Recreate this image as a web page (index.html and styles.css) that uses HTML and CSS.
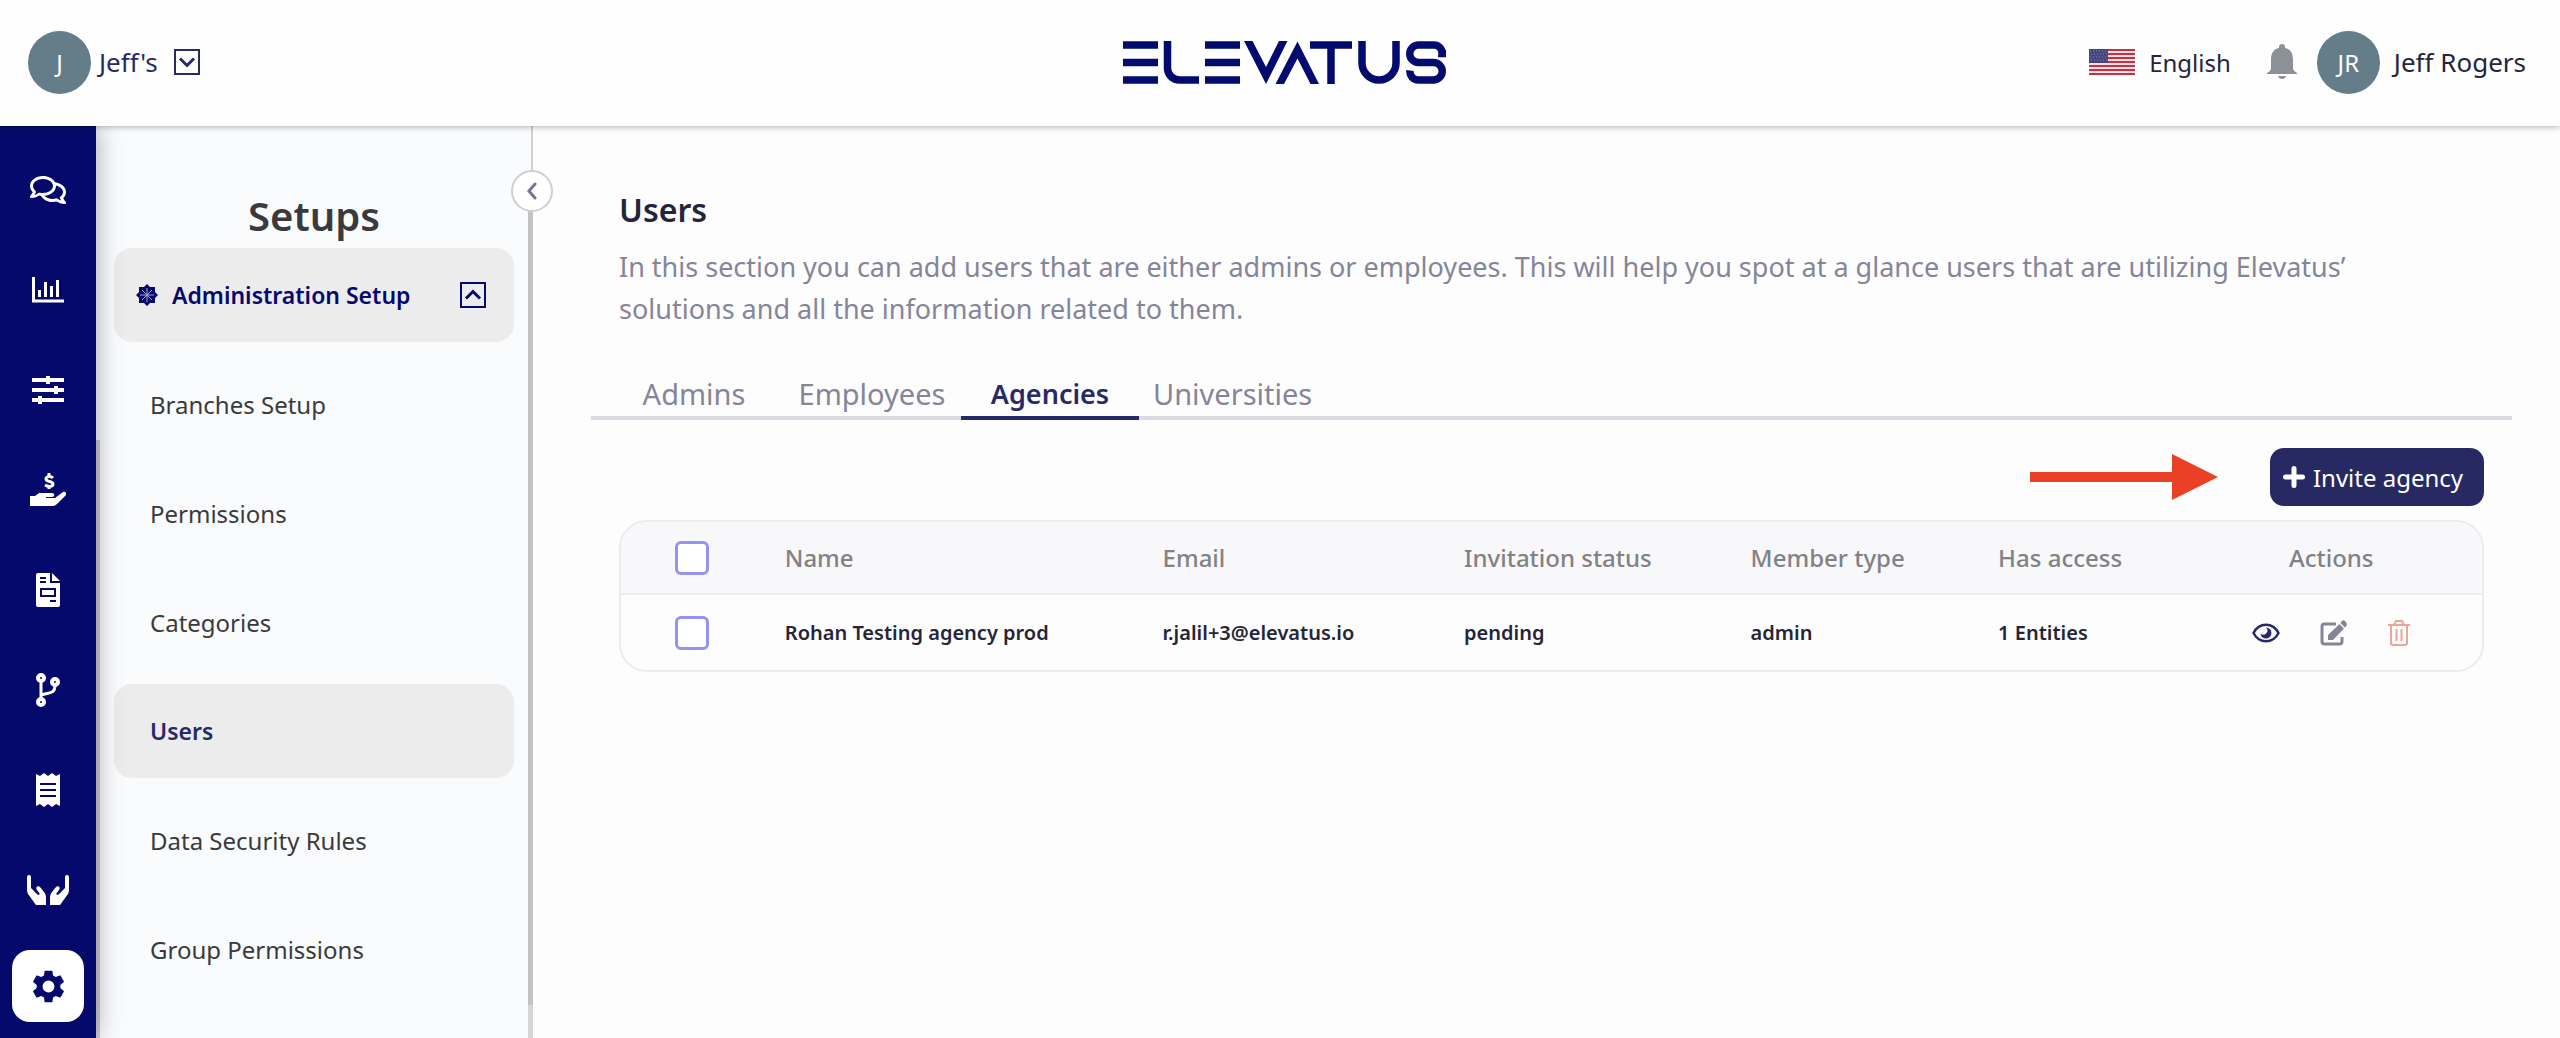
FILE: index.html
```html
<!DOCTYPE html>
<html lang="en">
<head>
<meta charset="utf-8">
<title>Elevatus – Users</title>
<link rel="stylesheet" href="styles.css">
</head>
<body>
<header class="topbar">
  <button class="company" type="button">
    <span class="avatar">J</span>
    <span class="person">Jeff's</span>
    <svg class="box-chevron" viewBox="0 0 26 26" fill="none" stroke="currentColor"><rect x="1" y="1" width="24" height="24" stroke-width="2"/><path d="M6 9.500l7 7 7-7" stroke-width="3"/></svg>
  </button>
  <a class="logo" href="#" aria-label="Elevatus home">
    <svg viewBox="0 0 323 43" fill="none" stroke="currentColor" stroke-width="7.500">
      <path d="M0 4h35M0 21.500h35M0 39h35M82 4h35M82 21.500h35M82 39h35M187 4h42M208 4v39"/>
      <path d="M44.500 0v27a12 12 0 0 0 12 12H76"/>
      <path d="M239 0v22a17 17 0 0 0 34 0V0"/>
      <path d="M323 12.500h-4a8 8 0 0 0-8.500-8.500h-15a8.500 8.500 0 0 0 0 17.500h15a8.500 8.500 0 0 1 0 17.500h-15a8.500 8.500 0 0 1-8.500-9.500"/>
      <path d="M121 0h8.500L143 26 156 0h8.500L143 43zM152.500 43l22-42.500L196 43h-8.500l-13-25.500-13.500 25.500z" fill="currentColor" stroke="none"/>
    </svg>
  </a>
  <div class="account">
    <button class="language" type="button">
      <svg class="flag" viewBox="0 0 46 26"><path fill="#f3dfe2" d="M0 0h46v26H0z"/><path stroke="#c23346" stroke-width="2" d="M0 1h46M0 5h46M0 9h46M0 13h46M0 17h46M0 21h46M0 25h46"/><path fill="#46467f" d="M0 0h19v14H0z"/><path stroke="#8583ad" stroke-dasharray="1 2" d="M1 2h17M2 5h16M1 8h17M2 11h16"/></svg>
      <span>English</span>
    </button>
    <button class="bell" type="button" aria-label="Notifications"><svg viewBox="0 0 30 36" fill="currentColor"><path d="M15 0a3 3 0 0 1 3 3v1c6 1 8 6 8 12v8c0 2 1 3 4 5v1H0v-1c3-2 4-3 4-5v-8C4 10 6 5 12 4V3a3 3 0 0 1 3-3zM11 32h8c-1 4-7 4-8 0z"/></svg></button>
    <button class="profile" type="button"><span class="avatar">JR</span><span class="person">Jeff Rogers</span></button>
  </div>
</header>
<div class="shell">
  <nav class="rail" aria-label="Main">
    <a href="#" aria-label="Conversations"><svg viewBox="0 0 576 512" fill="currentColor"><path d="M532 386.200c27.500-27.100 44-61.100 44-98.200 0-80-76.500-146.100-176.200-157.900C368.300 72.500 294.300 32 208 32 93.100 32 0 103.600 0 192c0 37 16.500 71 44 98.200-15.300 30.700-37.300 54.500-37.700 54.900-6.300 6.700-8.100 16.500-4.400 25 3.600 8.500 12 14 21.200 14 53.500 0 96.700-20.200 125.200-38.800 9.200 2.100 18.700 3.700 28.400 4.900C208.100 407.600 281.800 448 368 448c20.800 0 40.800-2.400 59.800-6.800C456.300 459.700 499.400 480 553 480c9.200 0 17.500-5.500 21.200-14 3.600-8.500 1.900-18.300-4.400-25-.4-.3-22.500-24.100-37.800-54.800zM142.200 298.800L122.100 312c-16.600 10.800-33.500 19.400-50.600 25.600 3.200-5.500 6.400-11.400 9.500-17.500l15.900-31.800L77.700 256C62.400 240.800 48 218.700 48 192c0-60.700 73.300-112 160-112s160 51.300 160 112-73.300 112-160 112c-16.500 0-33-1.900-49-5.600zM498.300 352l-24.700 24.400 15.500 31c3.100 6.200 6.300 12 9.500 17.600-17.100-6.200-34-14.800-50.600-25.600l-17.900-11.600-20.800 4.900c-16 3.700-32.500 5.600-49 5.600-54 0-102.200-20.100-131.300-49.700C338 339.500 416 272.900 416 192c0-3.400-.4-6.700-.7-10C479.700 196.500 528 238.800 528 288c0 26.700-14.400 48.800-29.700 64z"/></svg></a>
    <a href="#" aria-label="Analytics"><svg class="mid" viewBox="0 0 32 26" fill="none" stroke="currentColor" stroke-width="3"><path d="M1.500 0v24H32M7.500 13v7M13.500 5v15M19.500 9v11M25.500 3v17"/></svg></a>
    <a href="#" aria-label="Preferences"><svg class="mid" viewBox="0 0 32 28" fill="none" stroke="currentColor" stroke-width="4"><path d="M0 4h32M0 14h32M0 24h32M16 0v8M24 10v8M8 20v8"/></svg></a>
    <a href="#" aria-label="Finance"><svg viewBox="0 0 36 34" fill="currentColor"><path d="M0 23h5l4-3h13c3 0 3 4 0 4h-6v1h9l8-6c2-1 4 1 3 3l-9 9q-2 2-4 2H0z"/><path d="M23 5c-2-2-7-2-7 1s7 2 7 5-5 3-8 1M19 0v3M19 13v3" fill="none" stroke="currentColor" stroke-width="3"/></svg></a>
    <a href="#" aria-label="Invoices"><svg class="page" viewBox="0 0 24 34"><path fill="currentColor" d="M2 0h12v10h10v22a2 2 0 0 1-2 2H2a2 2 0 0 1-2-2V2a2 2 0 0 1 2-2zM16 0l8 8h-8z"/><path stroke="#06096c" stroke-width="2" fill="none" d="M4 5h6M4 9h6M5 16h14v7H5zM14 28h6"/></svg></a>
    <a href="#" aria-label="Pipelines"><svg class="page" viewBox="0 0 24 34" fill="none" stroke="currentColor" stroke-width="4"><circle cx="5" cy="5" r="3"/><circle cx="5" cy="29" r="3"/><circle cx="19" cy="9" r="3"/><path d="M5 8v18M19 12c0 9-5 7-14 10" stroke-width="3"/></svg></a>
    <a href="#" aria-label="Receipts"><svg class="page" viewBox="0 0 24 34"><path fill="currentColor" d="M0 1l4 2 4-3 4 3 4-3 4 3 4-2v32l-4-2-4 3-4-3-4 3-4-3-4 2z"/><path stroke="#06096c" stroke-width="2" d="M4 11h16M4 17h16M4 23h16"/></svg></a>
    <a href="#" aria-label="Onboarding"><svg class="wide" viewBox="0 0 42 30" fill="currentColor"><path d="M0 2a2 2 0 0 1 4 0v11l7 7 2-1-3-4c-2-3 1-5 3-3l4 5q2 2 2 5v8H9l-8-11q-1-2-1-4zM42 2a2 2 0 0 0-4 0v11l-7 7-2-1 3-4c2-3-1-5-3-3l-4 5q-2 2-2 5v8h10l8-11q1-2 1-4z"/></svg></a>
    <a href="#" class="current" aria-label="Setups"><svg class="gear" viewBox="2 2 20 20" fill="currentColor"><path d="M19.140 12.940c.04-.3.060-.61.060-.94 0-.32-.02-.64-.07-.94l2.030-1.580c.18-.14.230-.41.120-.61l-1.920-3.320c-.12-.22-.37-.29-.59-.22l-2.390.96c-.5-.38-1.030-.7-1.620-.94l-.36-2.540c-.04-.24-.24-.41-.48-.41h-3.840c-.24 0-.43.17-.47.41l-.36 2.540c-.59.24-1.130.57-1.620.94l-2.390-.96c-.22-.08-.47 0-.59.22L2.740 8.870c-.12.210-.08.470.12.610l2.030 1.580c-.05.300-.09.630-.09.940s.02.640.07.940l-2.030 1.580c-.18.140-.23.410-.12.610l1.920 3.320c.12.220.37.290.59.220l2.390-.96c.5.380 1.030.7 1.620.94l.36 2.540c.05.240.24.410.48.410h3.840c.24 0 .44-.17.47-.41l.36-2.540c.59-.24 1.130-.56 1.620-.94l2.390.96c.22.080.47 0 .59-.22l1.920-3.320c.12-.22.070-.47-.12-.61zM12 15.600A3.600 3.600 0 1 1 12 8.400a3.600 3.600 0 0 1 0 7.200z"/></svg></a>
  </nav>
  <aside class="sidebar">
    <button class="collapse" type="button" aria-label="Collapse sidebar"><svg viewBox="0 0 12 18" fill="none" stroke="currentColor" stroke-width="3" stroke-linecap="round"><path d="M9 2L3 9l6 7"/></svg></button>
    <h2>Setups</h2>
    <button class="group" type="button">
      <svg class="flower" viewBox="0 0 22 22" fill="currentColor"><path d="M11 0l3 3 5 0v5l3 3-3 3v5h-5l-3 3-3-3H3v-5l-3-3 3-3V3h5z"/><path d="M11 4v14M4 11h14M6 6l10 10M16 6L6 16" stroke="#a9aac9" stroke-width="1"/></svg>
      <span>Administration Setup</span>
      <svg class="box-chevron" viewBox="0 0 26 26" fill="none" stroke="currentColor"><rect x="1" y="1" width="24" height="24" stroke-width="2"/><path d="M6 16.500l7-7 7 7" stroke-width="3"/></svg>
    </button>
    <nav class="menu" aria-label="Administration Setup">
      <a href="#">Branches Setup</a>
      <a href="#">Permissions</a>
      <a href="#">Categories</a>
      <a href="#" class="current">Users</a>
      <a href="#">Data Security Rules</a>
      <a href="#">Group Permissions</a>
    </nav>
  </aside>
  <main class="content">
    <div class="intro">
      <h1>Users</h1>
      <p>In this section you can add users that are either admins or employees. This will help you spot at a glance users that are utilizing Elevatus’ solutions and all the information related to them.</p>
    </div>
    <nav class="tabs" aria-label="User types">
      <a href="#">Admins</a>
      <a href="#">Employees</a>
      <a href="#" class="current">Agencies</a>
      <a href="#">Universities</a>
    </nav>
    <div class="toolbar">
      <svg class="arrow" viewBox="0 0 188 46" fill="#ea4025"><path d="M0 18h142V0l46 23-46 23V28H0z"/></svg>
      <button class="invite" type="button"><svg viewBox="0 0 22 22" stroke="currentColor" stroke-width="5" stroke-linecap="round"><path d="M11 2.500v17M2.500 11h17"/></svg>Invite agency</button>
    </div>
    <div class="card">
      <table>
        <colgroup><col class="c-check"><col class="c-name"><col class="c-email"><col class="c-status"><col class="c-type"><col class="c-access"><col class="c-actions"></colgroup>
        <thead>
          <tr><th><input type="checkbox" aria-label="Select all"></th><th>Name</th><th>Email</th><th>Invitation status</th><th>Member type</th><th>Has access</th><th class="center">Actions</th></tr>
        </thead>
        <tbody>
          <tr><td><input type="checkbox" aria-label="Select Rohan Testing agency prod"></td><td>Rohan Testing agency prod</td><td>r.jalil+3@elevatus.io</td><td>pending</td><td>admin</td><td>1 Entities</td>
            <td><div class="actions">
              <button class="view" type="button" aria-label="View"><svg viewBox="0 0 28 20"><path d="M1.500 10C7-1 21-1 26.500 10 21 21 7 21 1.500 10z" fill="none" stroke="currentColor" stroke-width="2.500"/><path d="M14 4.500a5.500 5.500 0 1 1-5.500 6 3 3 0 0 0 5.500-6z" fill="currentColor"/></svg></button>
              <button class="edit" type="button" aria-label="Edit"><svg viewBox="0 0 28 26"><path d="M16 4H4.500A2.500 2.500 0 0 0 2 6.500v15A2.500 2.500 0 0 0 4.500 24h15a2.500 2.500 0 0 0 2.500-2.500V17" fill="none" stroke="currentColor" stroke-width="3"/><path d="M8 20v-5L19.500 4l4.500 4.500L13 20zM21 2q2-3 4.500-.5t.5 5L25 7.500 20.500 3z" fill="currentColor"/></svg></button>
              <button class="delete" type="button" aria-label="Delete"><svg viewBox="0 0 22 26" fill="none" stroke="currentColor" stroke-width="2"><path d="M0 5h22M3 5v18a2 2 0 0 0 2 2h12a2 2 0 0 0 2-2V5M6 5l2-4h6l2 4M8.500 9v12M13.500 9v12"/></svg></button>
            </div></td></tr>
        </tbody>
      </table>
    </div>
  </main>
</div>
</body>
</html>
```
FILE: styles.css
```css
* { box-sizing: border-box; }

body {
  margin: 0;
  min-height: 100vh;
  display: flex;
  flex-direction: column;
  font-family: "Noto Sans", "Open Sans", sans-serif;
  font-size: 24px;
  color: #25253a;
  background: #fdfdfd;
}

button {
  font: inherit;
  color: inherit;
  border: 0;
  padding: 0;
  background: none;
  display: flex;
  align-items: center;
}

a { color: inherit; text-decoration: none; }
svg { display: block; flex: none; }

.topbar {
  display: grid;
  grid-template-columns: 1fr auto 1fr;
  align-items: center;
  height: 126px;
  padding: 0 34px 2px 28px;
  background: #fefefe;
  box-shadow: 0 1px 6px rgba(0, 0, 0, 0.3);
  z-index: 2;
}

.avatar {
  width: 63px;
  height: 63px;
  border-radius: 50%;
  background: #657c89;
  color: #fff;
  display: flex;
  align-items: center;
  justify-content: center;
}

.person { font-size: 26px; }
.company { justify-self: start; color: #272a66; gap: 8px; }
.box-chevron { width: 26px; height: 26px; }
.company .box-chevron { margin-left: 8px; }
.logo { margin-left: 14px; color: #050b6e; }
.logo svg { width: 323px; height: 43px; }
.account { justify-self: end; display: flex; align-items: center; }
.language { gap: 14px; margin-right: 36px; }
.flag { width: 46px; height: 26px; }
.bell { color: #8b9196; margin-right: 20px; }
.bell svg { width: 30px; height: 36px; }
.profile { gap: 14px; }

.shell { flex: 1; display: flex; }

.rail {
  width: 96px;
  flex: none;
  padding: 14px 12px;
  background: #06096c;
  color: #fff;
  display: flex;
  flex-direction: column;
  align-items: center;
  box-shadow: 0 0 24px rgba(0, 0, 0, 0.35);
  z-index: 1;
}

.rail a {
  height: 100px;
  display: flex;
  align-items: center;
  justify-content: center;
}

.rail svg { width: 36px; height: 34px; }
.rail .mid { width: 32px; height: 28px; }
.rail .page { width: 24px; }
.rail .wide { width: 42px; height: 30px; }
.rail .gear { width: 33px; height: 33px; }

.rail .current {
  width: 72px;
  height: 72px;
  margin-top: 10px;
  border-radius: 18px;
  background: #fff;
  color: #06096c;
}

/* The right edge is a thin rule with the scroll track and thumb below the collapse button. */
.sidebar {
  position: relative;
  width: 437px;
  flex: none;
  padding: 64px 19px 0 18px;
  background:
    linear-gradient(#d6d6d8, #d6d6d8) right bottom / 5px 33px no-repeat,
    linear-gradient(#c3c3c5, #c3c3c5) right bottom / 5px calc(100% - 64px) no-repeat,
    linear-gradient(#d0d0d2, #d0d0d2) right top / 2px 100% no-repeat,
    linear-gradient(#cfcfd3, #cfcfd3) left bottom / 4px calc(100% - 314px) no-repeat,
    #fafbfc;
  color: #3a3a3c;
}

.sidebar h2 {
  margin: 0;
  height: 58px;
  font-size: 40px;
  line-height: 52px;
  font-weight: 600;
  text-align: center;
}

.collapse {
  position: absolute;
  top: 44px;
  right: -20px;
  width: 42px;
  height: 42px;
  justify-content: center;
  border: 2px solid #cfcfd1;
  border-radius: 50%;
  background: #fff;
  color: #77778c;
}

.collapse svg { width: 12px; height: 18px; }

.group {
  width: 100%;
  height: 94px;
  padding: 0 28px 0 22px;
  border-radius: 18px;
  background: #ececec;
  color: #06096c;
  font-size: 23px;
  font-weight: 600;
}

.group .box-chevron { margin-left: auto; }
.flower { width: 22px; height: 22px; margin-right: 14px; }

.menu {
  display: flex;
  flex-direction: column;
  gap: 15px;
  padding-top: 15px;
}

.menu a {
  height: 94px;
  padding-left: 36px;
  border-radius: 18px;
  display: flex;
  align-items: center;
}

.menu .current { background: #ececec; color: #272a66; font-size: 23px; font-weight: 600; }

.content { flex: 1; min-width: 0; padding: 60px 48px 40px 58px; }
.intro { padding: 0 28px; }

.intro h1 {
  margin: 0;
  font-size: 32px;
  line-height: 48px;
  font-weight: 600;
}

.intro p {
  margin: 12px 0 0;
  max-width: 1780px;
  font-size: 27px;
  line-height: 42px;
  color: #85859a;
}

.tabs {
  display: flex;
  margin-top: 42px;
  padding-left: 14px;
  border-bottom: 4px solid #dadbe0;
  font-size: 29px;
  line-height: 44px;
  color: #85859a;
}

.tabs a {
  min-width: 178px;
  padding: 0 14px;
  margin-bottom: -4px;
  border-bottom: 4px solid transparent;
  text-align: center;
}

.tabs .current { border-color: #272a66; color: #272a66; font-size: 27px; font-weight: 600; }

.toolbar {
  display: flex;
  align-items: center;
  justify-content: flex-end;
  gap: 52px;
  padding: 28px 28px 14px;
}

.arrow { width: 188px; height: 46px; }

.invite {
  width: 214px;
  height: 58px;
  padding-right: 8px;
  justify-content: center;
  gap: 8px;
  border-radius: 14px;
  background: #272a62;
  color: #fff;
}

.invite svg { width: 22px; height: 22px; }

.card {
  margin: 0 28px;
  border: 2px solid #ebebf0;
  border-radius: 28px;
  overflow: hidden;
}

table { width: 100%; table-layout: fixed; border-collapse: collapse; text-align: left; }
th, td { padding: 0; font-weight: 500; }
th { height: 72px; background: #f8f8fb; color: #828284; }
thead tr { border-bottom: 2px solid #ededf1; }
td { height: 76px; font-size: 20px; font-weight: 600; }
.center { text-align: center; }
.c-check { width: 8.8%; }
.c-name { width: 20.3%; }
.c-email { width: 16.2%; }
.c-status { width: 15.4%; }
.c-type { width: 13.3%; }
.c-access { width: 9.8%; }
.c-actions { width: 16.2%; }

input[type="checkbox"] {
  appearance: none;
  display: block;
  width: 34px;
  height: 34px;
  margin: 0 0 0 54px;
  border: 3px solid #9492f5;
  border-radius: 6px;
  background: #fff;
}

.actions { display: flex; align-items: center; justify-content: center; gap: 40px; }
.actions svg { height: 26px; }
.view { color: #272a66; }
.view svg { width: 28px; }
.edit { color: #85859a; }
.edit svg { width: 28px; }
.delete { color: #eda59b; }
.delete svg { width: 22px; }
```
